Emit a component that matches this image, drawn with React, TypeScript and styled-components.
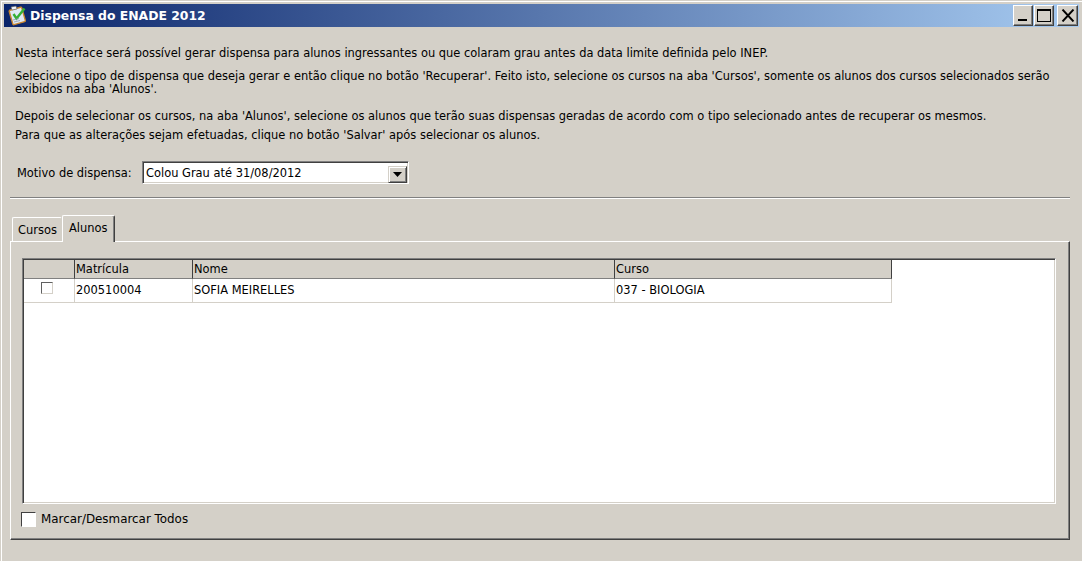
import styled, { createGlobalStyle } from 'styled-components';

const GlobalStyle = createGlobalStyle`
	html, body {
		margin: 0;
		padding: 0;
		background: #d4d0c8;
		overflow: hidden;
	}
	* {
		box-sizing: border-box;
	}
`;

const columns = [
	{ label: '', width: 51 },
	{ label: 'Matrícula', width: 118 },
	{ label: 'Nome', width: 422 },
	{ label: 'Curso', width: 277 },
];

const Window = styled.div`
	width: 1082px;
	height: 561px;
	background: #d4d0c8;
	padding: 4px 3px 0 4px;
	box-shadow: inset 1px 1px 0 #d4d0c8, inset 2px 2px 0 #fff;
	font-family: 'DejaVu Sans', 'Liberation Sans', sans-serif;
	font-size: 11.45px;
	color: #000;
	display: flex;
	flex-direction: column;
`;

const TitleBar = styled.div`
	height: 23px;
	flex: none;
	display: flex;
	align-items: center;
	padding: 0 1px 0 3px;
	background: linear-gradient(90deg, #0a246a 0%, #a6caf0 100%);
`;

const TitleText = styled.div`
	margin-left: 2px;
	color: #fff;
	font-size: 12.4px;
	font-weight: bold;
	flex: 1;
`;

const WinButton = styled.div<{ $close?: boolean }>`
	width: ${(props) => (props.$close ? 21 : 20)}px;
	height: 21px;
	margin-left: ${(props) => (props.$close ? 3 : 1)}px;
	background: #d4d0c8;
	border: 1px solid;
	border-color: #fff #404040 #404040 #fff;
	box-shadow: inset -1px -1px 0 #808080;
	display: flex;
	align-items: center;
	justify-content: center;
`;

const Content = styled.div`
	flex: 1;
	display: flex;
	flex-direction: column;
	padding: 0 9px 0 6px;
`;

const Intro = styled.div`
	padding: 20px 12px 0 5px;
	display: flex;
	flex-direction: column;
`;

const Paragraph = styled.p<{ $gap: number }>`
	margin: 0 0 ${(props) => props.$gap}px;
	line-height: 13px;
`;

const FormRow = styled.div`
	display: flex;
	align-items: center;
	height: 23px;
	margin: 19px 0 0 7px;
`;

const FieldLabel = styled.label`
	width: 125px;
`;

const Select = styled.div`
	width: 267px;
	height: 23px;
	background: #fff;
	border: 1px solid;
	border-color: #808080 #fff #fff #808080;
	box-shadow: inset 1px 1px 0 #404040, inset -1px -1px 0 #d4d0c8;
	display: flex;
	justify-content: space-between;
	padding: 4px 1px 0 3px;
`;

const SelectArrow = styled.div`
	width: 19px;
	height: 17px;
	background: #d4d0c8;
	border: 1px solid;
	border-color: #d4d0c8 #404040 #404040 #d4d0c8;
	box-shadow: inset 1px 1px 0 #fff, inset -1px -1px 0 #808080;
	display: flex;
	align-items: center;
	justify-content: center;
`;

const Divider = styled.div`
	height: 2px;
	margin-top: 13px;
	background: #808080;
	border-bottom: 1px solid #fff;
`;

const TabStrip = styled.div`
	display: flex;
	align-items: flex-end;
	height: 27px;
	margin-top: 15px;
	position: relative;
	z-index: 1;
`;

const Tab = styled.div<{ $active?: boolean }>`
	height: ${(props) => (props.$active ? 27 : 24)}px;
	width: ${(props) => (props.$active ? 53 : 50)}px;
	margin-bottom: ${(props) => (props.$active ? -1 : 0)}px;
	margin-left: ${(props) => (props.$active ? 0 : 2)}px;
	background: #d4d0c8;
	border-top: 1px solid #fff;
	border-left: 1px solid #fff;
	border-right: 1px solid ${(props) => (props.$active ? '#404040' : '#d4d0c8')};
	border-radius: 2px 2px 0 0;
	padding: 5px 0 0 ${(props) => (props.$active ? 6 : 5)}px;
	box-shadow: ${(props) => (props.$active ? 'inset -1px 0 0 #808080' : 'none')};
`;

const TabPanel = styled.div`
	width: 1060px;
	height: 299px;
	border: 1px solid;
	border-color: #fff #404040 #404040 #fff;
	box-shadow: inset -1px -1px 0 #808080;
	padding: 16px 13px 0 11px;
	display: flex;
	flex-direction: column;
`;

const TableFrame = styled.div`
	height: 246px;
	flex: none;
	background: #fff;
	border: 1px solid;
	border-color: #808080 #fff #fff #808080;
	box-shadow: inset 1px 1px 0 #404040, inset -1px -1px 0 #d4d0c8;
	padding: 1px;
`;

const HeaderRow = styled.div`
	display: flex;
	height: 19px;
`;

const HeaderCell = styled.div<{ $width: number }>`
	width: ${(props) => props.$width}px;
	background: #d4d0c8;
	border-bottom: 1px solid #808080;
	border-right: 1px solid #404040;
	padding: 2px 0 0 1px;
`;

const DataRow = styled.div`
	display: flex;
	height: 24px;
`;

const DataCell = styled.div<{ $width: number }>`
	width: ${(props) => props.$width}px;
	border-bottom: 1px solid #d4d0c8;
	border-right: 1px solid #d4d0c8;
	padding: 4px 0 0 1px;
`;

const CheckCell = styled(DataCell)`
	padding: 3px 0 0 17px;
`;

const SmallCheck = styled.div`
	width: 12px;
	height: 12px;
	background: #fff;
	border: 1px solid;
	border-color: #606060 #d4d0c8 #d4d0c8 #606060;
`;

const CheckRow = styled.div`
	display: flex;
	align-items: center;
	margin: 7px 0 0 -1px;
	height: 16px;
	font-size: 11.9px;
`;

const BigCheck = styled.div`
	width: 15px;
	height: 15px;
	background: #fff;
	border: 1px solid;
	border-color: #404040 #fff #fff #404040;
	margin-right: 5px;
`;

const App = () => {
	return (
		<>
			<GlobalStyle />
			<Window>
				<TitleBar>
					<svg width="21" height="21" viewBox="0 0 21 21">
						<rect x="3.5" y="3.5" width="13" height="15" rx="1" fill="#dfe8f4" stroke="#c9852e" strokeWidth="1.4" transform="rotate(-16 10 10)" />
						<path d="M4 2l5-1 1 3-5 1z" fill="#eef2f8" stroke="#5a5a5a" strokeWidth="0.6" />
						<path d="M6.500 9l3 4.500 8-10" fill="none" stroke="#35b035" strokeWidth="2.4" />
						<path d="M6 15l6-1.500M7 17l6-1.500" stroke="#8a97ab" strokeWidth="0.8" />
					</svg>
					<TitleText>Dispensa do ENADE 2012</TitleText>
					<WinButton>
						<svg width="14" height="15" viewBox="0 0 14 15">
							<rect x="2" y="11" width="9" height="2" fill="#000" />
						</svg>
					</WinButton>
					<WinButton>
						<svg width="14" height="13" viewBox="0 0 14 13">
							<path d="M0 0h14v13H0zM1 2v10h12V2z" fill="#000" fillRule="evenodd" />
						</svg>
					</WinButton>
					<WinButton $close>
						<svg width="14" height="13" viewBox="0 0 14 13">
							<path d="M1.500 0.500l11 12M12.500 0.500l-11 12" stroke="#000" strokeWidth="1.9" />
						</svg>
					</WinButton>
				</TitleBar>
				<Content>
					<Intro>
						<Paragraph $gap={10}>
							Nesta interface será possível gerar dispensa para alunos ingressantes ou que colaram grau antes da data limite definida pelo INEP.
						</Paragraph>
						<Paragraph $gap={14}>
							Selecione o tipo de dispensa que deseja gerar e então clique no botão 'Recuperar'. Feito isto, selecione os cursos na aba 'Cursos', somente os alunos dos cursos selecionados serão exibidos na aba 'Alunos'.
						</Paragraph>
						<Paragraph $gap={6}>
							Depois de selecionar os cursos, na aba 'Alunos', selecione os alunos que terão suas dispensas geradas de acordo com o tipo selecionado antes de recuperar os mesmos.
						</Paragraph>
						<Paragraph $gap={0}>
							Para que as alterações sejam efetuadas, clique no botão 'Salvar' após selecionar os alunos.
						</Paragraph>
					</Intro>
					<FormRow>
						<FieldLabel>Motivo de dispensa:</FieldLabel>
						<Select>
							Colou Grau até 31/08/2012
							<SelectArrow>
								<svg width="9" height="5" viewBox="0 0 9 5">
									<path d="M0 0h9L4.500 5z" fill="#000" />
								</svg>
							</SelectArrow>
						</Select>
					</FormRow>
					<Divider />
					<TabStrip>
						<Tab>Cursos</Tab>
						<Tab $active>Alunos</Tab>
					</TabStrip>
					<TabPanel>
						<TableFrame>
							<HeaderRow>
								{columns.map((col) => (
									<HeaderCell key={col.label} $width={col.width}>
										{col.label}
									</HeaderCell>
								))}
							</HeaderRow>
							<DataRow>
								<CheckCell $width={columns[0].width}>
									<SmallCheck />
								</CheckCell>
								<DataCell $width={columns[1].width}>200510004</DataCell>
								<DataCell $width={columns[2].width}>SOFIA MEIRELLES</DataCell>
								<DataCell $width={columns[3].width}>037 - BIOLOGIA</DataCell>
							</DataRow>
						</TableFrame>
						<CheckRow>
							<BigCheck />
							Marcar/Desmarcar Todos
						</CheckRow>
					</TabPanel>
				</Content>
			</Window>
		</>
	);
};

export default App;
